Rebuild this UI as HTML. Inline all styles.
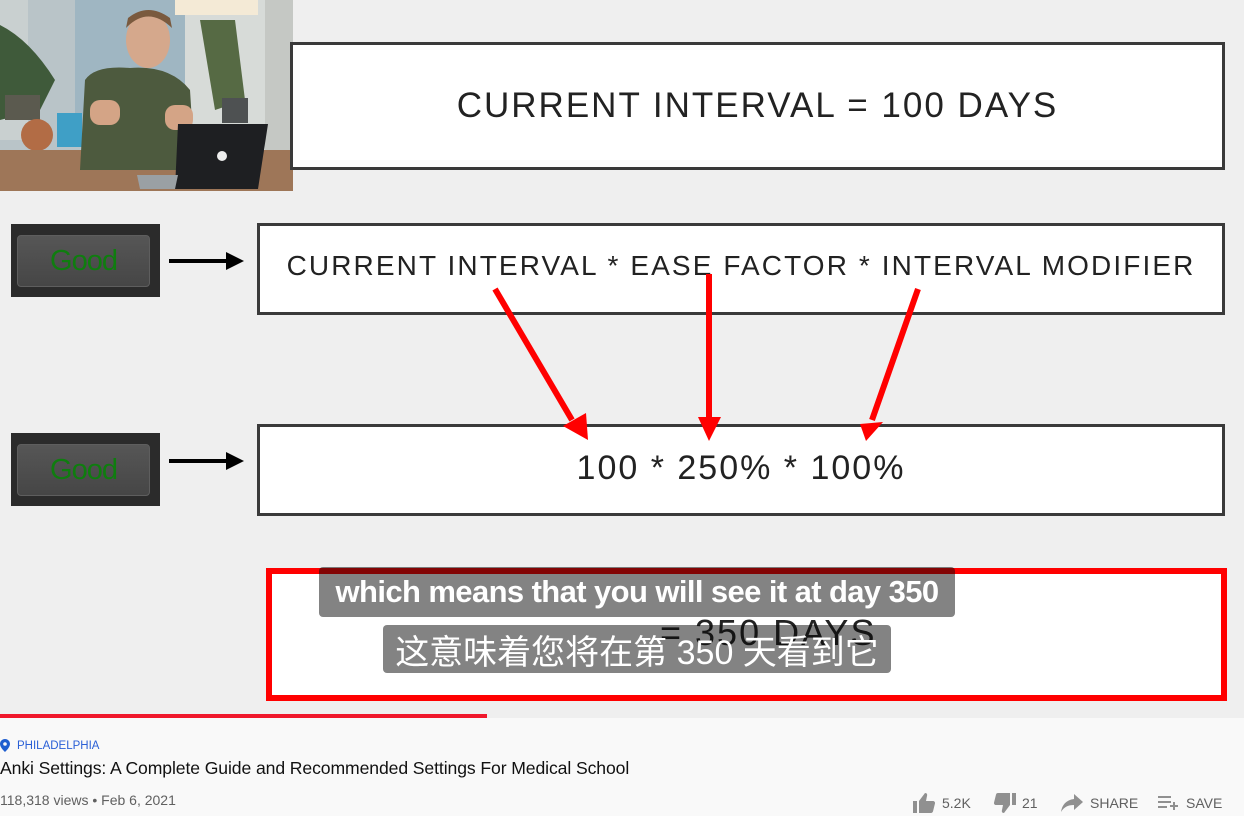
<!DOCTYPE html>
<html><head><meta charset="utf-8"><style>
*{margin:0;padding:0;box-sizing:border-box}
body{width:1244px;height:816px;overflow:hidden;background:#f9f9f9;font-family:"Liberation Sans",sans-serif;position:relative}
.vid{position:absolute;left:0;top:0;width:1244px;height:718px;background:#efefef;overflow:hidden}
.box{position:absolute;background:#fff;border:3px solid #3a3a3a;display:flex;align-items:center;justify-content:center;color:#222;letter-spacing:2px}
.good{position:absolute;background:#2b2b2b;width:149px;height:73px}
.good div{position:absolute;left:6px;top:11px;width:133px;height:52px;background:linear-gradient(#565656,#464646);border:1px solid #5e5e5e;border-radius:4px;color:#0f7d0f;font-size:29px;display:flex;align-items:center;justify-content:center;letter-spacing:-1px}
.cap{position:absolute;background:rgba(8,8,8,0.5);color:#fff;border-radius:4px;display:flex;align-items:center;justify-content:center}
.abs{position:absolute}
</style></head><body>
<div class="vid">
<svg class="abs" style="left:0;top:0" width="293" height="191" viewBox="0 0 293 191">
<rect width="293" height="191" fill="#b9c4c8"/>
<rect x="75" y="0" width="110" height="140" fill="#9fb6c2"/>
<rect x="0" y="0" width="28" height="140" fill="#c9d0d0"/>
<rect x="185" y="0" width="80" height="150" fill="#d7dbd8"/>
<rect x="175" y="0" width="83" height="15" fill="#f4ead6"/>
<rect x="265" y="0" width="28" height="191" fill="#c5c8c4"/>
<path d="M0 25 Q30 40 55 80 L40 110 L0 120Z" fill="#3f5a3a"/>
<rect x="5" y="95" width="35" height="25" fill="#5b5a4f"/>
<path d="M200 20 L235 20 L245 100 L215 110Z" fill="#566a44"/>
<rect x="222" y="98" width="26" height="25" fill="#4e5152"/>
<circle cx="37" cy="135" r="16" fill="#b26c45"/>
<rect x="57" y="113" width="25" height="34" fill="#3f9fc6"/>
<rect x="0" y="150" width="293" height="41" fill="#9e7658"/>
<path d="M85 80 Q95 65 130 68 Q170 65 190 90 L195 170 L80 170Z" fill="#4d5a3e"/>
<ellipse cx="148" cy="40" rx="22" ry="28" fill="#d5a88c"/>
<path d="M126 28 Q148 5 172 28 L170 18 Q148 2 128 18Z" fill="#7a5a3e"/>
<rect x="90" y="100" width="30" height="25" rx="10" fill="#d4a486"/>
<rect x="165" y="105" width="28" height="25" rx="10" fill="#d4a486"/>
<path d="M178 124 L268 124 L258 189 L175 189Z" fill="#1e1f22"/>
<path d="M137 175 L178 175 L175 189 L140 189Z" fill="#9aa0a4"/>
<circle cx="222" cy="156" r="5" fill="#eee"/>
</svg>
<div class="box" style="left:290px;top:42px;width:935px;height:128px;font-size:35px;letter-spacing:2px">CURRENT INTERVAL = 100 DAYS</div>
<div class="box" style="left:257px;top:223px;width:968px;height:92px;font-size:28px;letter-spacing:2.1px;padding-bottom:6px">CURRENT INTERVAL * EASE FACTOR * INTERVAL MODIFIER</div>
<div class="box" style="left:257px;top:424px;width:968px;height:92px;font-size:34px;letter-spacing:2px;padding-bottom:4px">100 * 250% * 100%</div>
<div class="abs" style="left:266px;top:568px;width:961px;height:133px;background:#fff;border:6px solid #f00"></div>
<div class="abs" style="left:660px;top:612px;font-size:36px;color:#222;letter-spacing:2px">= 350 DAYS</div>
<div class="good" style="left:11px;top:224px"><div>Good</div></div>
<div class="good" style="left:11px;top:433px"><div>Good</div></div>
<svg class="abs" style="left:0;top:0" width="1244" height="718">
<g stroke="#000" stroke-width="4"><line x1="169" y1="261" x2="228" y2="261"/><line x1="169" y1="461" x2="228" y2="461"/></g>
<polygon points="226,252 244,261 226,270" fill="#000"/>
<polygon points="226,452 244,461 226,470" fill="#000"/>
<g stroke="#f00" stroke-width="6"><line x1="495" y1="289" x2="572" y2="420"/><line x1="709" y1="274" x2="709" y2="418"/><line x1="918" y1="289" x2="872" y2="420"/></g>
<polygon points="563,426 586,413 588,440" fill="#f00"/>
<polygon points="698,417 721,417 709,441" fill="#f00"/>
<polygon points="860,424 883,422 866,441" fill="#f00"/>
</svg>
<div class="cap" style="left:319px;top:567px;width:636px;height:50px;font-size:31px;font-weight:bold;letter-spacing:-0.6px">which means that you will see it at day 350</div>
<div class="cap" style="left:383px;top:625px;width:508px;height:48px;font-size:34px;font-family:'Liberation Sans','Noto Sans CJK SC',sans-serif">这意味着您将在第 350 天看到它</div>
</div>
<div class="abs" style="left:0;top:714px;width:487px;height:4px;background:#f0182b"></div>
<svg class="abs" style="left:0;top:739px" width="10" height="13" viewBox="0 0 10 13"><path d="M5 0C2.2 0 0 2.2 0 5c0 3.5 5 8 5 8s5-4.5 5-8c0-2.8-2.2-5-5-5zm0 6.8a1.8 1.8 0 110-3.6 1.8 1.8 0 010 3.6z" fill="#1f5ecf"/></svg>
<div class="abs" style="left:17px;top:740px;font-size:11.5px;color:#2a5fd6">PHILADELPHIA</div>
<div class="abs" style="left:0;top:758px;font-size:17.6px;color:#111;letter-spacing:-0.1px">Anki Settings: A Complete Guide and Recommended Settings For Medical School</div>
<div class="abs" style="left:0;top:792px;font-size:14px;color:#606060">118,318 views • Feb 6, 2021</div>
<svg class="abs" style="left:912px;top:792px" width="24" height="22" viewBox="0 0 24 22"><path d="M1 9h4v12H1zM7 9l6-8c2 0 2.5 1.5 2 3l-1 5h7c1.3 0 2.3 1.2 2 2.4l-2 8c-.3 1-1 1.6-2 1.6H7z" fill="#909090"/></svg>
<div class="abs" style="left:942px;top:795px;font-size:14px;color:#606060">5.2K</div>
<svg class="abs" style="left:993px;top:792px" width="24" height="22" viewBox="0 0 24 22"><path d="M19 1h4v12h-4zM17 13l-6 8c-2 0-2.5-1.5-2-3l1-5H3c-1.3 0-2.3-1.2-2-2.4l2-8C3.3 1.6 4 1 5 1h12z" fill="#909090"/></svg>
<div class="abs" style="left:1022px;top:795px;font-size:14px;color:#606060">21</div>
<svg class="abs" style="left:1061px;top:794px" width="22" height="18" viewBox="0 0 22 18"><path d="M13 0l9 8-9 8v-5C7 11 3 13 0 18 1 11 5 6 13 5z" fill="#909090"/></svg>
<div class="abs" style="left:1090px;top:795px;font-size:14px;color:#606060">SHARE</div>
<svg class="abs" style="left:1158px;top:795px" width="22" height="16" viewBox="0 0 22 16"><path d="M0 1h13v2H0zM0 6h13v2H0zM0 11h9v2H0zM15 7h2v3h3v2h-3v3h-2v-3h-3v-2h3z" fill="#909090"/></svg>
<div class="abs" style="left:1186px;top:795px;font-size:14px;color:#606060">SAVE</div>
</body></html>
